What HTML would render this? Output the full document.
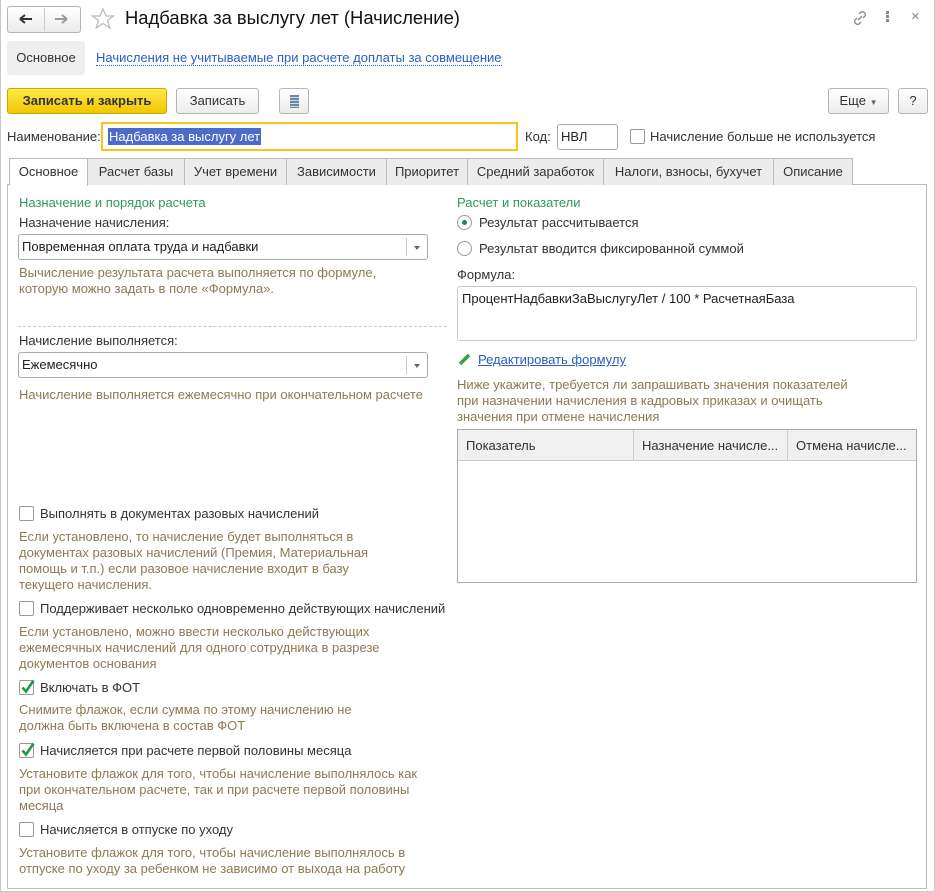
<!DOCTYPE html>
<html><head><meta charset="utf-8"><style>
*{box-sizing:border-box;margin:0;padding:0}
body{width:935px;height:892px;background:#fff;font-family:"Liberation Sans",Arial,sans-serif;font-size:13px;color:#333;position:relative;overflow:hidden}
.a{position:absolute;white-space:nowrap}
.btn{position:absolute;border:1px solid #b5b5b5;border-radius:3px;background:linear-gradient(#fff,#ececec);text-align:center;line-height:24px;color:#333}
.hint{color:#8c7a55;line-height:16px}
.grn{color:#2f9a5c}
.sel{position:absolute;border:1px solid #aaa;border-radius:3px;background:#fff;height:26px;line-height:24px;padding-left:3px;color:#222}
.sel:after{content:"";position:absolute;right:0;top:3px;width:20px;height:18px;border-left:1px solid #ccc}
.sel i{position:absolute;right:7px;top:11px;border:3px solid transparent;border-top:4px solid #666;border-bottom:0}
.cb{position:absolute;width:15px;height:15px;border:1px solid #999;border-radius:2px;background:#fff}
.tab{position:absolute;top:158px;height:27px;border:1px solid #bdbdbd;border-bottom:none;background:#ececec;text-align:center;line-height:26px;color:#333}
.rb{position:absolute;width:15px;height:15px;border:1px solid #999;border-radius:50%;background:#fff}
</style></head><body>
<div style="position:absolute;left:0;top:0;width:935px;height:892px;border:1px solid #c8c8c8;border-top:none"></div>
<div class="btn" style="left:7px;top:6px;width:74px;height:27px"></div>
<div style="position:absolute;left:44px;top:8px;width:1px;height:23px;background:#ccc"></div>
<svg class="a" style="left:17px;top:12px" width="60" height="14"><path d="M3 7h12M3 7l5-4M3 7l5 4" stroke="#333" stroke-width="2" fill="none"/><path d="M38 7h12M50 7l-5-4M50 7l-5 4" stroke="#999" stroke-width="2" fill="none"/></svg>
<svg class="a" style="left:91px;top:7px" width="24" height="23"><path d="M12 2l3 7h7.5l-6 4.5 2.3 7.5L12 16.5 5.2 21l2.3-7.5-6-4.5H9z" fill="none" stroke="#bbb" stroke-width="1.2"/></svg>
<div class="a" style="left:125px;top:7px;font-size:18.4px;color:#111">Надбавка за выслугу лет (Начисление)</div>
<svg class="a" style="left:851px;top:9px" width="18" height="18"><path d="M7 11l4-4M6 9l-2 2a3 3 0 004 4l2-2M12 9l2-2a3 3 0 00-4-4l-2 2" stroke="#888" stroke-width="1.3" fill="none"/></svg>
<div class="a" style="left:886px;top:11px;width:3px;height:3px;background:#888;box-shadow:0 4px #888,0 8px #888"></div>
<div class="a" style="left:911px;top:8px;color:#888;font-size:15px">×</div>
<div class="a" style="left:7px;top:41px;width:78px;height:34px;background:#efefef;border-radius:3px;line-height:34px;text-align:center;color:#333">Основное</div>
<div class="a" style="left:96px;top:50px;color:#2a5ebf;border-bottom:1px dotted #2a5ebf;line-height:15px">Начисления не учитываемые при расчете доплаты за совмещение</div>
<div class="btn" style="left:7px;top:88px;width:160px;height:26px;background:linear-gradient(#ffe84a,#f1c800);border-color:#c9a800;font-weight:bold;color:#333">Записать и закрыть</div>
<div class="btn" style="left:176px;top:88px;width:83px;height:26px">Записать</div>
<div class="btn" style="left:279px;top:88px;width:30px;height:26px"><div style="position:absolute;left:10px;top:6px;width:9px;height:13px;background:repeating-linear-gradient(#6c87a3 0 2px,#cfd9e4 2px 3px)"></div></div>
<div class="btn" style="left:828px;top:88px;width:61px;height:26px">Еще <span style="font-size:8px;color:#666">▼</span></div>
<div class="btn" style="left:898px;top:88px;width:30px;height:26px">?</div>
<div class="a" style="left:7px;top:129px">Наименование:</div>
<div class="a" style="left:101px;top:122px;width:417px;height:29px;border:2px solid #f5c518"></div>
<div class="a" style="left:108px;top:128px;background:#4d6bc9;color:#fff;line-height:17px;padding:0 1px">Надбавка за выслугу лет</div>
<div class="a" style="left:525px;top:129px">Код:</div>
<div class="a" style="left:557px;top:124px;width:61px;height:26px;border:1px solid #aaa;border-radius:3px;padding-left:3px;line-height:24px;color:#222">НВЛ</div>
<div class="cb" style="left:630px;top:129px"></div>
<div class="a" style="left:650px;top:129px">Начисление больше не используется</div>
<div class="a" style="left:7px;top:184px;width:920px;height:705px;border:1px solid #bdbdbd"></div>
<div class="tab" style="left:9px;width:79px;background:#fff;height:28px">Основное</div>
<div class="tab" style="left:87px;width:98px">Расчет базы</div>
<div class="tab" style="left:184px;width:103px">Учет времени</div>
<div class="tab" style="left:286px;width:101px">Зависимости</div>
<div class="tab" style="left:386px;width:82px">Приоритет</div>
<div class="tab" style="left:467px;width:137px">Средний заработок</div>
<div class="tab" style="left:603px;width:171px">Налоги, взносы, бухучет</div>
<div class="tab" style="left:773px;width:80px">Описание</div>
<div class="a grn" style="left:19px;top:195px">Назначение и порядок расчета</div>
<div class="a" style="left:19px;top:215px">Назначение начисления:</div>
<div class="sel" style="left:18px;top:234px;width:410px">Повременная оплата труда и надбавки<i></i></div>
<div class="a hint" style="left:19px;top:265px">Вычисление результата расчета выполняется по формуле,<br>которую можно задать в поле «Формула».</div>
<div class="a" style="left:18px;top:326px;width:429px;border-top:1px dashed #ccc"></div>
<div class="a" style="left:19px;top:333px">Начисление выполняется:</div>
<div class="sel" style="left:18px;top:352px;width:410px">Ежемесячно<i></i></div>
<div class="a hint" style="left:19px;top:387px">Начисление выполняется ежемесячно при окончательном расчете</div>
<div class="cb" style="left:19px;top:506px"></div>
<div class="a" style="left:40px;top:506px">Выполнять в документах разовых начислений</div>
<div class="a hint" style="left:19px;top:529px">Если установлено, то начисление будет выполняться в<br>документах разовых начислений (Премия, Материальная<br>помощь и т.п.) если разовое начисление входит в базу<br>текущего начисления.</div>
<div class="cb" style="left:19px;top:601px"></div>
<div class="a" style="left:40px;top:601px">Поддерживает несколько одновременно действующих начислений</div>
<div class="a hint" style="left:19px;top:624px">Если установлено, можно ввести несколько действующих<br>ежемесячных начислений для одного сотрудника в разрезе<br>документов основания</div>
<div class="cb" style="left:19px;top:680px"></div>
<svg class="a" style="left:19px;top:678px" width="18" height="18"><path d="M3.5 9.5l3.5 4 7.5-11" stroke="#1e9a4a" stroke-width="2.6" fill="none"/></svg>
<div class="a" style="left:40px;top:680px">Включать в ФОТ</div>
<div class="a hint" style="left:19px;top:702px">Снимите флажок, если сумма по этому начислению не<br>должна быть включена в состав ФОТ</div>
<div class="cb" style="left:19px;top:743px"></div>
<svg class="a" style="left:19px;top:741px" width="18" height="18"><path d="M3.5 9.5l3.5 4 7.5-11" stroke="#1e9a4a" stroke-width="2.6" fill="none"/></svg>
<div class="a" style="left:40px;top:743px">Начисляется при расчете первой половины месяца</div>
<div class="a hint" style="left:19px;top:766px">Установите флажок для того, чтобы начисление выполнялось как<br>при окончательном расчете, так и при расчете первой половины<br>месяца</div>
<div class="cb" style="left:19px;top:822px"></div>
<div class="a" style="left:40px;top:822px">Начисляется в отпуске по уходу</div>
<div class="a hint" style="left:19px;top:845px">Установите флажок для того, чтобы начисление выполнялось в<br>отпуске по уходу за ребенком не зависимо от выхода на работу</div>
<div class="a grn" style="left:457px;top:195px">Расчет и показатели</div>
<div class="rb" style="left:457px;top:215px"><div style="position:absolute;left:4px;top:4px;width:5px;height:5px;border-radius:50%;background:#1e8a4a"></div></div>
<div class="a" style="left:479px;top:215px">Результат рассчитывается</div>
<div class="rb" style="left:457px;top:241px"></div>
<div class="a" style="left:479px;top:241px">Результат вводится фиксированной суммой</div>
<div class="a" style="left:457px;top:267px">Формула:</div>
<div class="a" style="left:457px;top:286px;width:460px;height:55px;border:1px solid #ccc;border-radius:3px;padding:4px 4px;color:#222">ПроцентНадбавкиЗаВыслугуЛет / 100 * РасчетнаяБаза</div>
<svg class="a" style="left:457px;top:351px" width="16" height="16"><path d="M3 13l9-9" stroke="#3c9a3c" stroke-width="3.5"/><path d="M2 14l2-3 1 1z" fill="#c97"/></svg>
<div class="a" style="left:478px;top:352px;color:#2a5ebf;text-decoration:underline">Редактировать формулу</div>
<div class="a hint" style="left:457px;top:377px">Ниже укажите, требуется ли запрашивать значения показателей<br>при назначении начисления в кадровых приказах и очищать<br>значения при отмене начисления</div>
<div class="a" style="left:457px;top:429px;width:460px;height:154px;border:1px solid #aaa"></div>
<div class="a" style="left:458px;top:430px;width:458px;height:31px;background:#f0f0f0;border-bottom:1px solid #ccc"></div>
<div class="a" style="left:633px;top:430px;width:1px;height:31px;background:#ccc"></div>
<div class="a" style="left:787px;top:430px;width:1px;height:31px;background:#ccc"></div>
<div class="a" style="left:466px;top:438px">Показатель</div>
<div class="a" style="left:642px;top:438px">Назначение начисле...</div>
<div class="a" style="left:796px;top:438px">Отмена начисле...</div>
</body></html>
